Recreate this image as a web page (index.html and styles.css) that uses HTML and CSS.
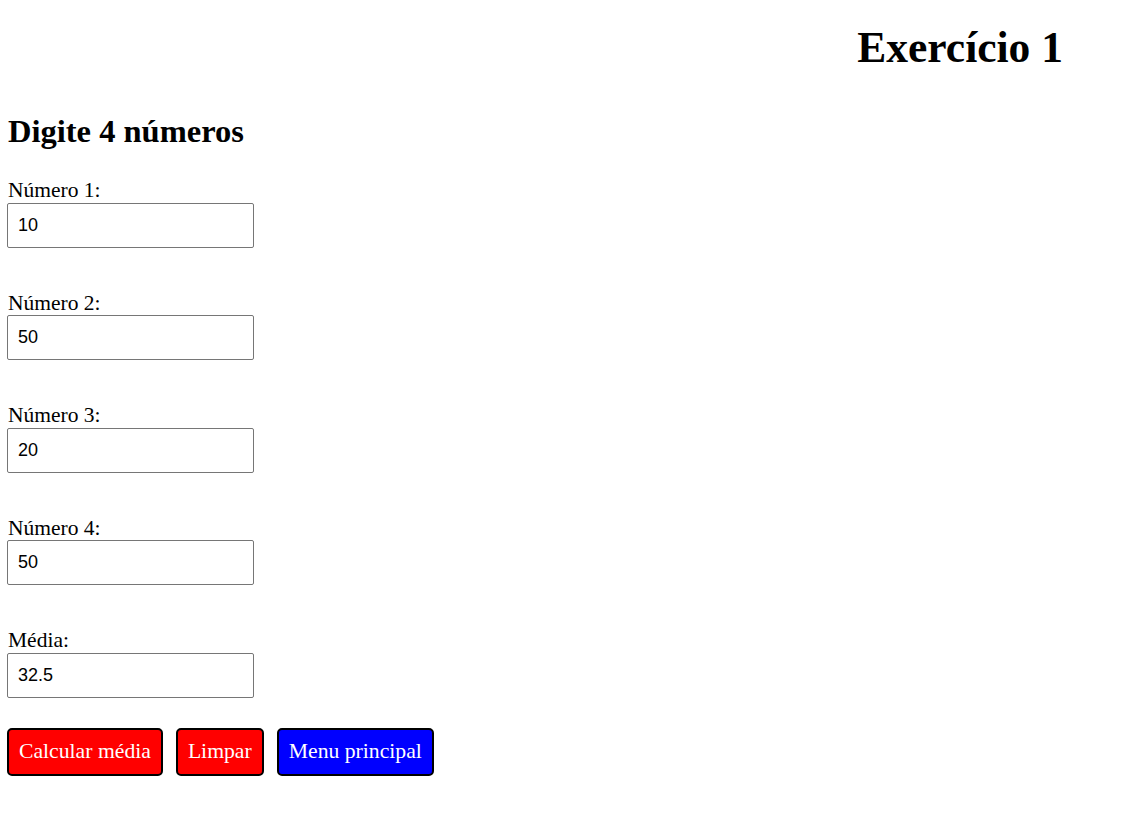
FILE: index.html
```html
<!DOCTYPE html>
<html lang="pt-BR">
<head>
<meta charset="utf-8">
<title>Exercício 1</title>
<link rel="stylesheet" href="styles.css">
</head>
<body>
<header class="top">
  <h1 class="title">Exercício 1</h1>
</header>
<main class="content">
  <h2 class="subtitle">Digite 4 números</h2>
  <form class="form">
    <div class="field">
      <label class="label" for="n1">Número 1:</label>
      <input class="input" id="n1" type="text" value="10">
    </div>
    <div class="field">
      <label class="label" for="n2">Número 2:</label>
      <input class="input" id="n2" type="text" value="50">
    </div>
    <div class="field">
      <label class="label" for="n3">Número 3:</label>
      <input class="input" id="n3" type="text" value="20">
    </div>
    <div class="field">
      <label class="label" for="n4">Número 4:</label>
      <input class="input" id="n4" type="text" value="50">
    </div>
    <div class="field">
      <label class="label" for="media">Média:</label>
      <input class="input" id="media" type="text" value="32.5">
    </div>
    <div class="actions">
      <button class="btn btn-red" type="button">Calcular média</button>
      <button class="btn btn-red" type="button">Limpar</button>
      <button class="btn btn-blue" type="button">Menu principal</button>
    </div>
  </form>
</main>
</body>
</html>
```
FILE: styles.css
```css
body {
  margin: 8px 8px 8px 7px;
  font-family: "Liberation Serif", "Times New Roman", serif;
  color: #000;
  background: #fff;
}
.top {
  display: flex;
  justify-content: flex-end;
  padding-right: 64px;
}
.title {
  font-size: 43.5px;
  font-weight: bold;
  margin: 14px 0 0 0;
}
.subtitle {
  font-size: 32.5px;
  font-weight: bold;
  margin: 41px 0 28px 1px;
}
.form {
  display: flex;
  flex-direction: column;
  gap: 43px;
}
.field {
  display: flex;
  flex-direction: column;
  align-items: flex-start;
}
.label {
  font-size: 21.5px;
  line-height: 24.5px;
  padding-left: 1px;
}
.input {
  box-sizing: border-box;
  width: 247px;
  height: 45px;
  padding: 0 10px;
  border: 1px solid #767676;
  border-radius: 2px;
  font-family: "Liberation Sans", Arial, sans-serif;
  font-size: 18px;
  color: #000;
  margin: 0;
}
.actions {
  display: flex;
  gap: 13px;
  margin-top: -13px;
}
.btn {
  box-sizing: border-box;
  height: 48px;
  padding: 0 10px;
  border: 2px solid #000;
  border-radius: 5px;
  font-family: "Liberation Serif", "Times New Roman", serif;
  font-size: 21.7px;
  color: #fff;
  cursor: pointer;
}
.btn-red { background: #ff0000; }
.btn-blue { background: #0000ff; }
```
